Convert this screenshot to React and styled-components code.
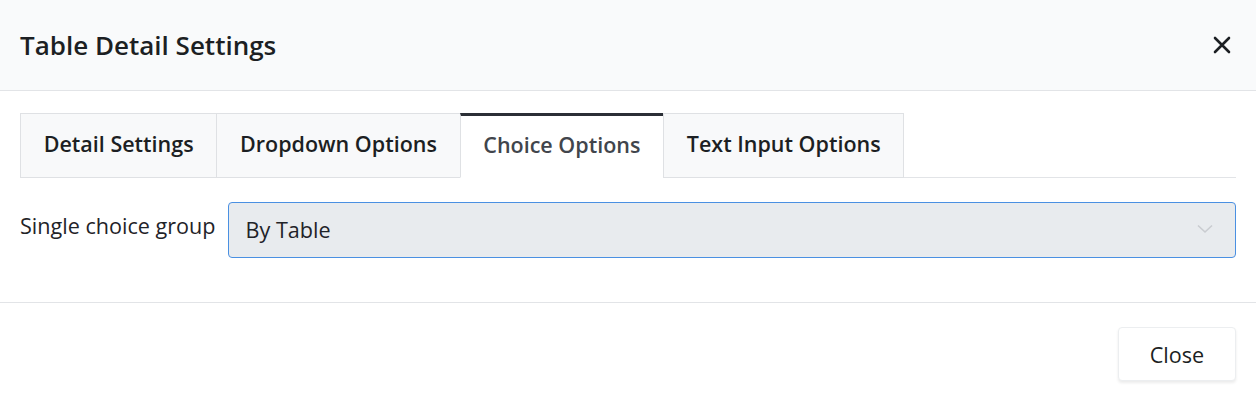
import React, { useState } from 'react'
import styled, { createGlobalStyle } from 'styled-components'

const GlobalStyle = createGlobalStyle`
    body {
        margin: 0;
        background: #ffffff;
        font-family: "Open Sans", "Liberation Sans", sans-serif;
        color: #1f2328;
    }
`

const Modal = styled.div`
    width: 1256px;
    background: #ffffff;
`

const Header = styled.div`
    height: 90px;
    display: flex;
    align-items: center;
    justify-content: space-between;
    padding: 0 20px;
    background: #f9fafb;
    border-bottom: 1px solid #e2e4e7;
`

const Title = styled.h2`
    margin: 0;
    font-size: 26px;
    font-weight: 600;
    color: #1c1f23;
`

const IconButton = styled.button`
    border: 0;
    background: transparent;
    padding: 0;
    width: 28px;
    height: 28px;
    display: flex;
    align-items: center;
    justify-content: center;
    cursor: pointer;
`

const Body = styled.div`
    padding: 22px 20px 44px;
    border-bottom: 1px solid #e2e4e7;
`

const TabList = styled.div`
    display: flex;
    border-bottom: 1px solid #e2e4e7;
`

// the active tab gets a thick top border and merges with the panel below
const Tab = styled.button`
    height: 65px;
    padding: 0 22.7px 5px;
    margin-right: -1px;
    margin-bottom: -1px;
    font-family: inherit;
    font-size: 21.5px;
    font-weight: 600;
    color: ${p => (p.$active ? '#41454c' : '#1c1f23')};
    background: ${p => (p.$active ? '#ffffff' : '#f8f9fa')};
    border: 1px solid #dfe1e4;
    border-top: ${p => (p.$active ? '3px solid #2b2f36' : '1px solid #dfe1e4')};
    border-bottom: ${p => (p.$active ? '1px solid #ffffff' : '1px solid #dfe1e4')};
    cursor: pointer;
    white-space: nowrap;
`

const Row = styled.div`
    display: flex;
    align-items: flex-start;
    gap: 12px;
    margin-top: 24px;
`

const Label = styled.label`
    font-size: 21.6px;
    line-height: 29px;
    padding-top: 9px;
    color: #1f2328;
    white-space: nowrap;
`

const Select = styled.div`
    flex: 1;
    height: 52px;
    display: flex;
    align-items: center;
    justify-content: space-between;
    padding: 0 22px 2px 17px;
    background: #e8ebee;
    border: 1px solid #4a90e2;
    border-radius: 4px;
    font-size: 21.6px;
    color: #1f2328;
`

const Footer = styled.div`
    display: flex;
    justify-content: flex-end;
    padding: 24px 20px 19px;
`

const Button = styled.button`
    width: 118px;
    height: 54px;
    font-family: inherit;
    font-size: 21.6px;
    color: #1c1f23;
    background: #ffffff;
    border: 1px solid #eceef0;
    border-radius: 4px;
    box-shadow: 0 2px 3px rgba(0, 0, 0, 0.08);
    cursor: pointer;
`

const tabs = ['Detail Settings', 'Dropdown Options', 'Choice Options', 'Text Input Options']

export default function App() {
    const [active, setActive] = useState(2)
    return (
        <>
            <GlobalStyle />
            <Modal>
                <Header>
                    <Title>Table Detail Settings</Title>
                    <IconButton aria-label="close">
                        <svg width="18" height="18" viewBox="0 0 18 18">
                            <path d="M2 2 L16 16 M16 2 L2 16" stroke="#1c1f23" strokeWidth="2.6" strokeLinecap="round" />
                        </svg>
                    </IconButton>
                </Header>
                <Body>
                    <TabList>
                        {tabs.map((t, i) => (
                            <Tab key={t} $active={i === active} onClick={() => setActive(i)}>{t}</Tab>
                        ))}
                    </TabList>
                    <Row>
                        <Label>Single choice group</Label>
                        <Select>
                            <span>By Table</span>
                            <svg width="16" height="10" viewBox="0 0 16 10">
                                <path d="M1 1.5 L8 8 L15 1.5" fill="none" stroke="#c9ccd0" strokeWidth="1.6" />
                            </svg>
                        </Select>
                    </Row>
                </Body>
                <Footer>
                    <Button>Close</Button>
                </Footer>
            </Modal>
        </>
    )
}
